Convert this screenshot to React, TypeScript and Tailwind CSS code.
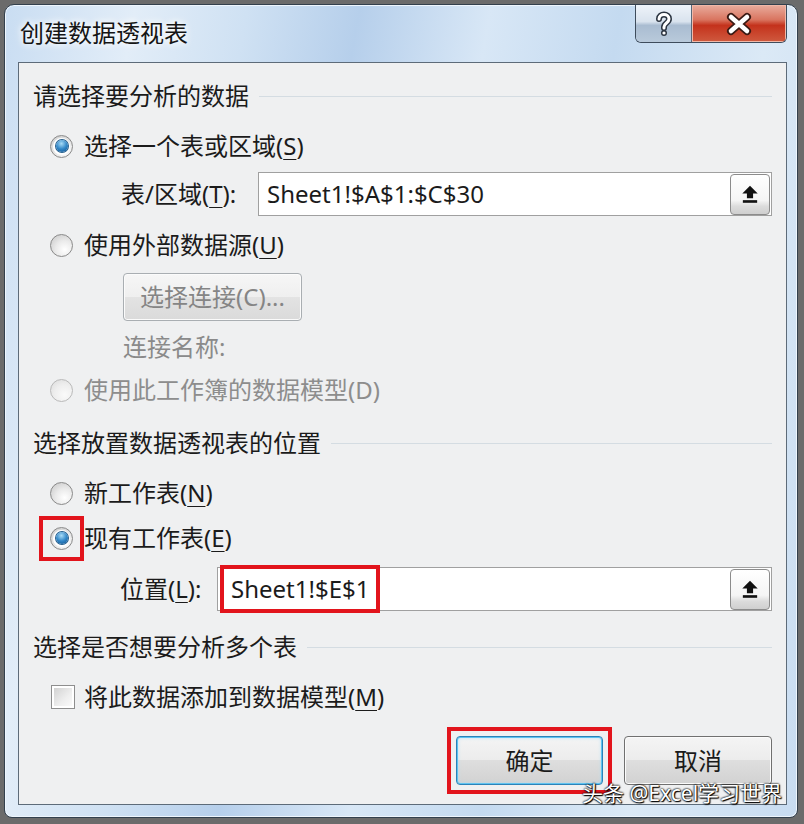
import React from "react";

const FONT = "font-['Noto_Sans','Noto_Sans_CJK_SC',sans-serif]";

function Radio({ checked, disabled }: { checked?: boolean; disabled?: boolean }) {
  return (
    <span
      className={`flex h-[23px] w-[23px] shrink-0 items-center justify-center rounded-full border ${
        disabled
          ? "border-[#b9b9b9] bg-[radial-gradient(circle_at_65%_70%,#fafafa,#eeeeee_50%,#dadada_100%)]"
          : "border-[#8a8a8a] bg-[radial-gradient(circle_at_65%_70%,#ffffff,#eaeaea_45%,#c4c4c4_100%)]"
      }`}
    >
      {checked && (
        <span className="flex h-[17px] w-[17px] items-center justify-center rounded-full bg-white">
          <span className="h-[12px] w-[12px] rounded-full bg-[radial-gradient(circle_at_45%_30%,#a9dcf7,#3388c8_50%,#0c4f8c)] shadow-[0_0_0_1px_#235d8c]" />
        </span>
      )}
    </span>
  );
}

function UploadButton() {
  return (
    <span className="mr-px flex h-[41px] w-[40px] shrink-0 items-center justify-center rounded-[4px] border border-[#8c8c8c] bg-[linear-gradient(#ffffff_0%,#f5f5f5_65%,#dcdcdc_80%,#cfcfcf_100%)]">
      <svg width="22" height="22" viewBox="0 0 20 20" aria-hidden="true">
        <path d="M10 2.5 L17 9.5 H12.8 V13.8 H7.2 V9.5 H3 Z" fill="#111" />
        <rect x="3.5" y="15.6" width="13" height="2.4" fill="#111" />
      </svg>
    </span>
  );
}

function Heading({ children }: { children: React.ReactNode }) {
  return (
    <div className="flex h-[24px] items-center">
      <span className="leading-none">{children}</span>
      <div className="ml-[10px] h-px flex-1 bg-[#d4dce2]" />
    </div>
  );
}

function U({ children }: { children: React.ReactNode }) {
  return <span className="underline decoration-1 underline-offset-[4px]">{children}</span>;
}

export default function App() {
  return (
    <div className={`relative h-[824px] w-[804px] overflow-hidden bg-[#6b6b6b] pl-[4px] pt-[4px] ${FONT}`}>
      {/* window frame */}
      <div className="h-[814px] w-[794px] rounded-t-[10px] rounded-b-[8px] border border-[#33404d] bg-[linear-gradient(100deg,#c9ddf2_0%,#e2edf8_14%,#cfe1f3_26%,#b6cfeb_38%,#d8e7f6_52%,#c4daf0_66%,#dbe9f6_82%,#c8dcf1_100%)] shadow-[inset_0_0_0_1px_#eef5fc]">
        {/* title bar */}
        <div className="flex h-[57px] items-start">
          <span className="ml-[15px] self-center pb-[2px] text-[24px] leading-none text-[#151515] [text-shadow:0_0_6px_#ffffff,0_0_10px_#ffffff]">
            创建数据透视表
          </span>
          <div className="ml-auto mr-[10px] flex h-[38px] overflow-hidden rounded-b-[6px] border border-t-0 border-[#3e4c5c]">
            <div className="flex w-[56px] items-center justify-center border-r border-[#5a6878] bg-[linear-gradient(#eef3f9_0%,#d9e3ee_45%,#a9bcd1_55%,#b9cadb_100%)]">
              <svg width="18" height="26" viewBox="0 0 18 26" aria-hidden="true">
                <path d="M4 8 C4 2 14 2 14 8 C14 12 9 12 9 16 V17" fill="none" stroke="#2b3440" strokeWidth="6" strokeLinecap="round" />
                <circle cx="9" cy="22" r="3" fill="#2b3440" />
                <path d="M4 8 C4 2 14 2 14 8 C14 12 9 12 9 16 V17" fill="none" stroke="#ffffff" strokeWidth="3" strokeLinecap="round" />
                <circle cx="9" cy="22" r="1.6" fill="#ffffff" />
              </svg>
            </div>
            <div className="flex w-[94px] items-center justify-center bg-[linear-gradient(#e9ad9e_0%,#d9745f_40%,#c4321c_55%,#cf5a3f_100%)] shadow-[inset_0_0_0_1px_#f0b8a8]">
              <svg width="30" height="24" viewBox="0 0 30 24" aria-hidden="true">
                <path d="M7 5 L23 19 M23 5 L7 19" stroke="#3a1a14" strokeWidth="8" strokeLinecap="round" />
                <path d="M7 5 L23 19 M23 5 L7 19" stroke="#ffffff" strokeWidth="4.5" strokeLinecap="round" />
              </svg>
            </div>
          </div>
        </div>

        {/* content panel */}
        <div className="ml-[13px] flex h-[743px] w-[769px] flex-col border border-[#5d6b79] bg-[#eff0f1] px-[14px] text-[24px] leading-none text-[#1b1b1b]">
          <div className="mt-[21px]">
            <Heading>请选择要分析的数据</Heading>
          </div>

          <div className="mt-[24px] flex h-[28px] items-center gap-[11px] pl-[17px]">
            <Radio checked />
            <span>
              选择一个表或区域(<U>S</U>)
            </span>
          </div>

          <div className="mt-[12px] flex h-[44px] items-center pl-[88px]">
            <span className="w-[137px] shrink-0">
              表/区域(<U>T</U>):
            </span>
            <div className="flex h-[44px] flex-1 items-center border border-[#a0a0a0] bg-white pl-[8px]">
              <span className="flex-1">Sheet1!$A$1:$C$30</span>
              <UploadButton />
            </div>
          </div>

          <div className="mt-[15px] flex h-[28px] items-center gap-[11px] pl-[17px]">
            <Radio />
            <span>
              使用外部数据源(<U>U</U>)
            </span>
          </div>

          <div className="mt-[14px] pl-[90px]">
            <div className="flex h-[48px] w-[179px] items-center justify-center rounded-[4px] border border-[#a9aeb2] bg-[linear-gradient(#f6f6f6_0%,#efefef_50%,#e3e3e3_50%,#dadada_100%)] text-[#858585] shadow-[inset_0_0_0_1px_#fbfbfb]">
              选择连接(C)...
            </div>
          </div>

          <div className="mt-[12px] flex h-[28px] items-center pl-[90px] text-[#8a8a8a]">连接名称:</div>

          <div className="mt-[15px] flex h-[28px] items-center gap-[11px] pl-[17px] text-[#8d8d8d]">
            <Radio disabled />
            <span>使用此工作簿的数据模型(D)</span>
          </div>

          <div className="mt-[27px]">
            <Heading>选择放置数据透视表的位置</Heading>
          </div>

          <div className="mt-[24px] flex h-[28px] items-center gap-[11px] pl-[17px]">
            <Radio />
            <span>
              新工作表(<U>N</U>)
            </span>
          </div>

          <div className="mt-[17px] flex h-[28px] items-center gap-[11px] pl-[17px]">
            <span className="outline-4 outline-offset-[7px] outline-[#e2141c]">
              <Radio checked />
            </span>
            <span>
              现有工作表(<U>E</U>)
            </span>
          </div>

          <div className="mt-[15px] flex h-[44px] items-center pl-[87px]">
            <span className="w-[97px] shrink-0">
              位置(<U>L</U>):
            </span>
            <div className="flex h-[44px] flex-1 items-center border border-[#a0a0a0] bg-white">
              <span className="ml-[6px] flex h-[40px] items-center px-[7px] outline-4 outline-[#e2141c]">Sheet1!$E$1</span>
              <span className="flex-1" />
              <UploadButton />
            </div>
          </div>

          <div className="mt-[24px]">
            <Heading>选择是否想要分析多个表</Heading>
          </div>

          <div className="mt-[24px] flex h-[28px] items-center gap-[9px] pl-[18px]">
            <span className="flex h-[24px] w-[24px] shrink-0 items-center justify-center border border-[#8e8e8e] bg-white">
              <span className="h-[18px] w-[18px] bg-[linear-gradient(135deg,#d2d2d2,#eeeeee_60%,#fafafa)]" />
            </span>
            <span>
              将此数据添加到数据模型(<U>M</U>)
            </span>
          </div>

          <div className="mt-[25px] flex h-[49px] justify-end gap-[21px]">
            <div className="flex outline-4 outline-offset-[5px] outline-[#e2141c]">
              <div className="flex w-[147px] items-center justify-center rounded-[4px] border border-[#2b82b8] bg-[linear-gradient(#f4f4f4_0%,#ececec_50%,#dedede_50%,#d2d2d2_100%)] shadow-[inset_0_0_0_1px_#5ec3f0,inset_0_0_4px_#a8dcf5]">
                确定
              </div>
            </div>
            <div className="flex w-[148px] items-center justify-center rounded-[4px] border border-[#707070] bg-[linear-gradient(#f4f4f4_0%,#ececec_50%,#dedede_50%,#d2d2d2_100%)] shadow-[inset_0_0_0_1px_#fbfbfb]">
              取消
            </div>
          </div>
        </div>
      </div>

      {/* watermark */}
      <span className="absolute left-[582px] top-[783px] whitespace-nowrap text-[21px] leading-none text-white [text-shadow:0_0_2px_#000,0_0_2px_#000,1px_1px_1px_#000]">
        头条 @Excel学习世界
      </span>
    </div>
  );
}
